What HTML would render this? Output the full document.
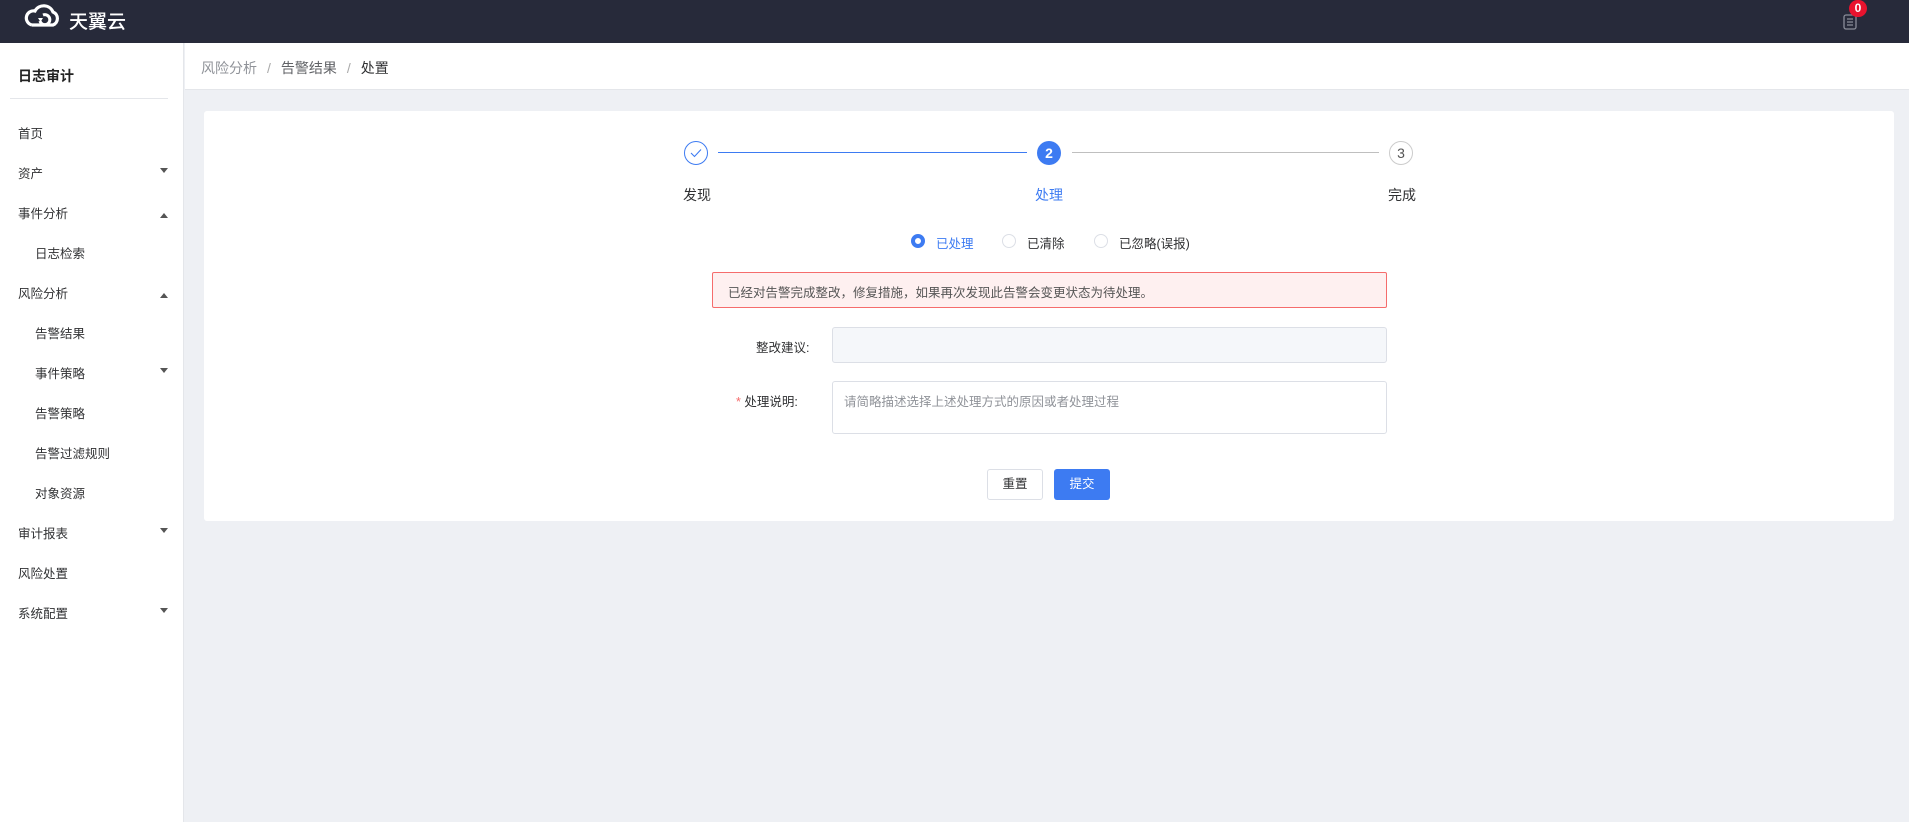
<!DOCTYPE html>
<html><head><meta charset="utf-8"><style>
*{margin:0;padding:0;box-sizing:border-box}
body{width:1909px;height:822px;overflow:hidden;background:#eef0f4;font-family:"Liberation Sans","Noto Sans CJK SC",sans-serif;position:relative;color:#303133}
.hdr{position:absolute;left:0;top:0;width:1909px;height:43px;background:#272a3a}
.side{position:absolute;left:0;top:43px;width:184px;height:779px;background:#fff;border-right:1px solid #e4e6ea}
.ab{position:absolute;white-space:nowrap}
.mi{position:absolute;font-size:12.5px;color:#303133}
.arr{position:absolute;left:160px;width:0;height:0;border-left:4px solid transparent;border-right:4px solid transparent}
.crumb{position:absolute;left:185px;top:43px;width:1724px;height:47px;background:#fff;border-bottom:1px solid #e4e6ea}
.card{position:absolute;left:204px;top:111px;width:1690px;height:410px;background:#fff;border-radius:3px}
.circ{position:absolute;width:24px;height:24px;border-radius:50%;text-align:center;line-height:22px;font-size:14px}
.radio{position:absolute;width:14px;height:14px;border-radius:50%;border:1px solid #dcdfe6;background:#fff}
</style></head><body>
<div class="hdr">
<svg class="ab" style="left:22px;top:4px" width="42" height="24" viewBox="0 0 42 24"><path d="M10 21 H31 A7 7 0 0 0 31 8 A10 10 0 0 0 13 7 A7 7 0 0 0 10 21" fill="none" stroke="#fff" stroke-width="3.2"/><path d="M21 11 A5 5 0 1 1 18 17" fill="none" stroke="#fff" stroke-width="3"/><path d="M16 14 L18.5 18 L21 14Z" fill="#fff"/></svg>
<div class="ab" style="left:69px;top:7px;font-size:19px;color:#fff;font-weight:500">天翼云</div>
<svg class="ab" style="left:1843px;top:13px" width="14" height="17" viewBox="0 0 14 17"><rect x="1" y="2" width="12" height="14" rx="2" fill="none" stroke="#8a8d99" stroke-width="1.3"/><path d="M4 6h6M4 9h6M4 12h6" stroke="#8a8d99" stroke-width="1.2"/></svg>
<div class="ab" style="left:1849px;top:0;width:18px;height:17px;border-radius:9px;background:#e8132e;color:#fff;font-size:12px;font-weight:bold;text-align:center;line-height:17px">0</div>
</div>
<div class="side">
<div class="ab" style="left:18px;top:23px;font-size:14px;font-weight:bold;color:#222">日志审计</div>
<div class="ab" style="left:10px;top:55px;width:158px;height:1px;background:#e4e6ea"></div>
<div class="mi" style="left:18px;top:80px">首页</div>
<div class="mi" style="left:18px;top:120px">资产</div><div class="arr" style="top:125px;border-top:5px solid #555"></div>
<div class="mi" style="left:18px;top:160px">事件分析</div><div class="arr" style="top:170px;border-bottom:5px solid #555"></div>
<div class="mi" style="left:35px;top:200px">日志检索</div>
<div class="mi" style="left:18px;top:240px">风险分析</div><div class="arr" style="top:250px;border-bottom:5px solid #555"></div>
<div class="mi" style="left:35px;top:280px">告警结果</div>
<div class="mi" style="left:35px;top:320px">事件策略</div><div class="arr" style="top:325px;border-top:5px solid #555"></div>
<div class="mi" style="left:35px;top:360px">告警策略</div>
<div class="mi" style="left:35px;top:400px">告警过滤规则</div>
<div class="mi" style="left:35px;top:440px">对象资源</div>
<div class="mi" style="left:18px;top:480px">审计报表</div><div class="arr" style="top:485px;border-top:5px solid #555"></div>
<div class="mi" style="left:18px;top:520px">风险处置</div>
<div class="mi" style="left:18px;top:560px">系统配置</div><div class="arr" style="top:565px;border-top:5px solid #555"></div>
</div>
<div class="crumb">
<div class="ab" style="left:16px;top:15px;font-size:14px;color:#909399">风险分析<span style="margin:0 10px;color:#aaa">/</span><span style="color:#606266">告警结果</span><span style="margin:0 10px;color:#aaa">/</span><span style="color:#303133">处置</span></div>
</div>
<div class="card"></div>
<div class="circ" style="left:684px;top:141px;border:1px solid #3d7bf2;color:#3d7bf2"><svg width="12" height="10" viewBox="0 0 12 10" style="margin-top:6px"><path d="M1 5 L4.5 8.5 L11 1.5" fill="none" stroke="#3d7bf2" stroke-width="1.1"/></svg></div>
<div class="ab" style="left:718px;top:152px;width:309px;height:1px;background:#3d7bf2"></div>
<div class="circ" style="left:1037px;top:141px;background:#3d7bf2;color:#fff;line-height:24px;font-weight:bold">2</div>
<div class="ab" style="left:1072px;top:152px;width:307px;height:1px;background:#bfbfbf"></div>
<div class="circ" style="left:1389px;top:141px;border:1px solid #ccc;color:#555">3</div>
<div class="ab" style="left:683px;top:185px;font-size:14px;color:#303133">发现</div>
<div class="ab" style="left:1035px;top:185px;font-size:14px;color:#3d7bf2">处理</div>
<div class="ab" style="left:1388px;top:185px;font-size:14px;color:#303133">完成</div>
<div class="radio" style="left:911px;top:234px;border:4px solid #3d7bf2"></div>
<div class="ab" style="left:936px;top:233px;font-size:12.5px;color:#3d7bf2">已处理</div>
<div class="radio" style="left:1002px;top:234px"></div>
<div class="ab" style="left:1027px;top:233px;font-size:12.5px;color:#303133">已清除</div>
<div class="radio" style="left:1094px;top:234px"></div>
<div class="ab" style="left:1119px;top:233px;font-size:12.5px;color:#303133">已忽略(误报)</div>
<div class="ab" style="left:712px;top:272px;width:675px;height:36px;border:1px solid #f56c6c;background:#fef0f0;border-radius:2px;font-size:12.5px;color:#555;padding:9px 15px">已经对告警完成整改，修复措施，如果再次发现此告警会变更状态为待处理。</div>
<div class="ab" style="left:756px;top:337px;font-size:12.5px;color:#303133">整改建议:</div>
<div class="ab" style="left:832px;top:327px;width:555px;height:36px;border:1px solid #dcdfe6;background:#f5f7fa;border-radius:3px"></div>
<div class="ab" style="left:736px;top:391px;font-size:12.5px;color:#303133"><span style="color:#f56c6c">*</span> 处理说明:</div>
<div class="ab" style="left:832px;top:381px;width:555px;height:53px;border:1px solid #dcdfe6;background:#fff;border-radius:3px;font-size:12.5px;color:#909399;padding:9px 11px">请简略描述选择上述处理方式的原因或者处理过程</div>
<div class="ab" style="left:987px;top:469px;width:56px;height:31px;border:1px solid #dcdfe6;border-radius:3px;font-size:12.5px;text-align:center;line-height:29px;background:#fff">重置</div>
<div class="ab" style="left:1054px;top:469px;width:56px;height:31px;border-radius:3px;font-size:12.5px;text-align:center;line-height:31px;background:#3d7bf2;color:#fff">提交</div>
</body></html>
